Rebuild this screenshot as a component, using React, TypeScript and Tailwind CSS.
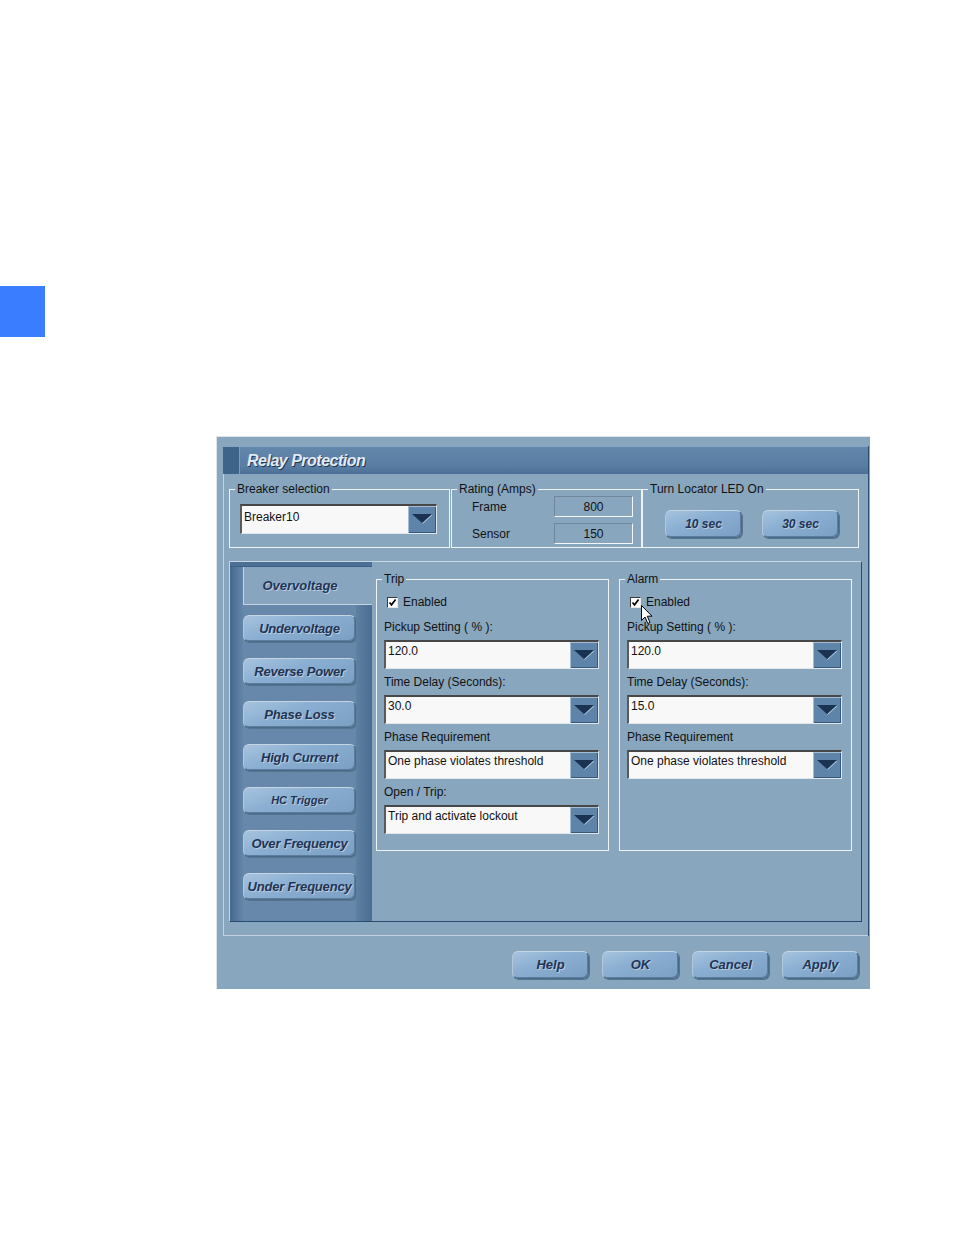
import React from 'react'

const sans = "font-['Liberation_Sans',Arial,sans-serif]"

function DropArrow() {
  return (
    <svg width="20" height="11" viewBox="0 0 20 11">
      <polygon points="0,0 20,0 10,9" fill="#1b3353" />
      <path d="M10.5 9.5 L20 1" stroke="#b7cadb" strokeWidth="1" fill="none" />
    </svg>
  )
}

function Combo({ value, className = '', textPad = 'pt-px' }: { value: string; className?: string; textPad?: string }) {
  return (
    <div
      className={`flex border-t-2 border-l-2 border-t-[#474747] border-l-[#5a5a5a] border-r border-b border-r-[#dfe7ed] border-b-[#dfe7ed] bg-[#f8f8f8] ${className}`}
    >
      <div className={`flex-1 truncate pl-[2px] text-[12px] leading-4 text-[#111] ${textPad}`}>{value}</div>
      <div className="flex w-[28px] items-center justify-center bg-[#5f84a9] shadow-[inset_1px_1px_0_#a3bdd5,inset_-1px_-1px_0_#36587b]">
        <DropArrow />
      </div>
    </div>
  )
}

function GlossButton({ label, className = '', text = 'text-[13px]' }: { label: string; className?: string; text?: string }) {
  return (
    <div
      className={`flex items-center justify-center rounded-[6px] border border-[#4a6a8a] border-t-[#c4d5e4] border-l-[#b3c7da] bg-[linear-gradient(160deg,#a6c3de_0%,#8bafd2_40%,#7a9fc3_100%)] shadow-[inset_-1px_-1px_0_#5c7d9e,1px_1px_0_#56738f] ${className}`}
    >
      <span className={`whitespace-nowrap font-bold italic text-[#1f3457] [text-shadow:1px_1px_0_#b7cbdc] ${text}`}>{label}</span>
    </div>
  )
}

function Group({ title, className = '', children }: { title: string; className?: string; children: React.ReactNode }) {
  return (
    <fieldset className={`border border-[#eef3f6] ${className}`}>
      <legend className="ml-[5px] px-[2px] text-[12px] leading-[14px] text-[#111]">{title}</legend>
      {children}
    </fieldset>
  )
}

function CheckBox() {
  return (
    <div className="flex h-[11px] w-[11px] items-center justify-center border border-t-[#3a3a3a] border-l-[#3a3a3a] border-r-[#e8e8e8] border-b-[#e8e8e8] bg-white">
      <svg width="9" height="9" viewBox="0 0 9 9">
        <path d="M1.5 4.5 L3.5 6.8 L7.6 1.5" stroke="#000" strokeWidth="1.7" fill="none" />
      </svg>
    </div>
  )
}

function Cursor() {
  return (
    <svg className="absolute left-[14px] top-[11px]" width="12" height="20" viewBox="0 0 12 20">
      <path d="M0.5 0.5 L0.5 15.5 L4 12 L6.8 18.5 L9 17.5 L6.3 11.2 L11 11.2 Z" fill="#fff" stroke="#000" strokeWidth="1" />
    </svg>
  )
}

const tabs = ['Undervoltage', 'Reverse Power', 'Phase Loss', 'High Current', 'HC Trigger', 'Over Frequency', 'Under Frequency']

function SettingBlock({ title, delay, cursor, extra }: { title: string; delay: string; cursor?: boolean; extra?: boolean }) {
  const fields: [string, string][] = [
    ['Pickup Setting ( % ):', '120.0'],
    ['Time Delay (Seconds):', delay],
    ['Phase Requirement', 'One phase violates threshold'],
  ]
  if (extra) fields.push(['Open / Trip:', 'Trip and activate lockout'])

  return (
    <Group title={title} className="h-[279px] w-[233px]">
      <div className="px-[7px] pt-[8px]">
        <div className="relative flex h-4 items-center gap-[5px] pl-[3px] text-[12px] text-[#111]">
          <CheckBox />
          <span>Enabled</span>
          {cursor && <Cursor />}
        </div>
        {fields.map(([label, value], i) => (
          <div key={label} className={i === 0 ? 'mt-[9px]' : 'mt-[5px]'}>
            <div className="text-[12px] leading-4 text-[#111]">{label}</div>
            <Combo value={value} className="mt-[5px] h-[29px] w-[215px]" />
          </div>
        ))}
      </div>
    </Group>
  )
}

export default function App() {
  return (
    <div className={`min-h-[1235px] w-full bg-white pt-[286px] ${sans}`}>
      <div className="h-[51px] w-[45px] bg-[#3b7dff]" />

      <div className="ml-[216px] mt-[99px] flex h-[553px] w-[654px] flex-col border-t border-l border-[#dce4ea] bg-[#88a7bf] pl-[6px] pr-px pt-[9px]">
        <div className="flex h-[490px] w-[646px] flex-col border-r border-[#2d4d70]">
          {/* title bar */}
          <div className="flex h-[28px] border-t border-[#86a6c4] bg-[linear-gradient(to_bottom,#6387ab,#5a7ea3_70%,#4b6f96)]">
            <div className="w-[17px] border-r border-[#7d9dbd] bg-[#3f648a]" />
            <div className="flex items-center pl-[7px] text-[16px] font-bold italic tracking-[-0.5px] text-[#e3ebf2] [text-shadow:1px_1px_0_#1f3756]">
              Relay Protection
            </div>
          </div>

          {/* body */}
          <div className="flex flex-1 flex-col border-l border-b border-[#c3d2de] pl-[5px] pt-[8px]">
            <div className="flex h-[66px]">
              <Group title="Breaker selection" className="h-[66px] w-[221px]">
                <div className="pl-[10px] pt-[8px]">
                  <Combo value="Breaker10" className="h-[30px] w-[197px]" textPad="pt-[3px]" />
                </div>
              </Group>
              <Group title="Rating (Amps)" className="ml-px h-[66px] w-[191px]">
                <div className="grid grid-cols-[82px_79px] gap-y-[6px] pl-[20px] text-[12px] text-[#111]">
                  <div className="flex items-center">Frame</div>
                  <div className="flex h-[21px] items-center justify-center border border-t-[#71889c] border-l-[#71889c] border-r-[#f3f6f8] border-b-[#f3f6f8]">
                    800
                  </div>
                  <div className="flex items-center">Sensor</div>
                  <div className="flex h-[21px] items-center justify-center border border-t-[#71889c] border-l-[#71889c] border-r-[#f3f6f8] border-b-[#f3f6f8]">
                    150
                  </div>
                </div>
              </Group>
              <Group title="Turn Locator LED On" className="h-[66px] w-[217px]">
                <div className="flex gap-[20px] pl-[22px] pt-[14px]">
                  <GlossButton label="10 sec" className="h-[28px] w-[77px]" text="text-[12px]" />
                  <GlossButton label="30 sec" className="h-[28px] w-[77px]" text="text-[12px]" />
                </div>
              </Group>
            </div>

            {/* protection panel */}
            <div className="mt-[13px] flex h-[361px] w-[633px] border border-[#c9d7e2] border-r-[#2b4b6e] border-b-[#2b4b6e]">
              <div className="flex w-[142px] flex-col">
                <div className="h-[5px] border-b border-[#3c5f85] bg-[#4c6f95]" />
                <div className="flex flex-1">
                  <div className="w-[13px] bg-[linear-gradient(to_right,#45688e,#6486a9)]" />
                  <div className="flex flex-1 flex-col">
                    <div className="flex h-[38px] items-center justify-center border-l border-b border-[#c4d3df] bg-[#87a5be] pr-[16px]">
                      <span className="text-[13px] font-bold italic text-[#1f3457] [text-shadow:1px_1px_0_#b7cbdc]">Overvoltage</span>
                    </div>
                    <div className="flex flex-1">
                      <div className="flex w-[113px] flex-col gap-[16px] bg-[#6888ab] pt-[10px]">
                        {tabs.map((t) => (
                          <GlossButton
                            key={t}
                            label={t}
                            className="h-[27px] w-[113px]"
                            text={t === 'HC Trigger' ? 'text-[11px]' : 'text-[13px] tracking-[-0.2px]'}
                          />
                        ))}
                      </div>
                      <div className="w-[16px] bg-[linear-gradient(to_right,#5e80a3,#4a6d92)]" />
                    </div>
                  </div>
                </div>
              </div>

              <div className="flex flex-1 gap-[10px] pl-[4px] pt-[10px]">
                <SettingBlock title="Trip" delay="30.0" extra />
                <SettingBlock title="Alarm" delay="15.0" cursor />
              </div>
            </div>
          </div>
        </div>

        {/* footer */}
        <div className="flex flex-1 justify-end gap-[13px] pr-[10px] pt-[15px]">
          {['Help', 'OK', 'Cancel', 'Apply'].map((b) => (
            <GlossButton key={b} label={b} className="h-[28px] w-[77px]" />
          ))}
        </div>
      </div>
    </div>
  )
}
